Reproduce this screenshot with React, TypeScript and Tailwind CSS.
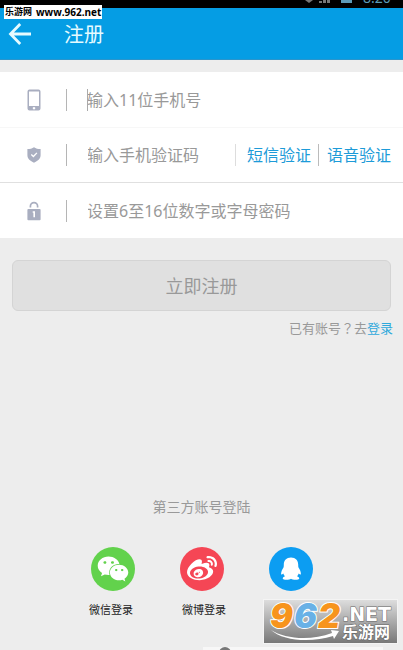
import { FaWeibo, FaWeixin } from "react-icons/fa"

function PhoneIcon() {
  return (
    <svg width="14" height="22" viewBox="0 0 14 22" aria-hidden="true">
      <path
        fill="#a9aec0"
        fillRule="evenodd"
        d="M2.500 0.500h9a2 2 0 0 1 2 2v17a2 2 0 0 1-2 2h-9a2 2 0 0 1-2-2v-17a2 2 0 0 1 2-2zM2 2.600v14.400h10V2.600zM7 17.900a1.300 1.300 0 1 0 0.010 0z"
      />
    </svg>
  )
}

function ShieldIcon() {
  return (
    <svg width="14" height="16" viewBox="0 0 14 16" aria-hidden="true">
      <path
        fill="#a9aec0"
        d="M7 0.200C8.800 1.500 11 2 13.600 2v6.200c0 3.500-3 5.800-6.600 7.500C3.400 14 0.400 11.700 0.400 8.200V2C3 2 5.200 1.500 7 0.200z"
      />
      <path fill="none" stroke="#fff" strokeWidth="1.300" d="M4.300 7.500l2.100 2 3.500-3.600" />
    </svg>
  )
}

function LockIcon() {
  return (
    <svg width="14" height="20" viewBox="0 0 14 20" aria-hidden="true">
      <path fill="none" stroke="#a9aec0" strokeWidth="1.700" d="M3.400 6.500V5.200a3.600 3.600 0 0 1 7.200 0v1.300" />
      <rect x="0.400" y="8" width="13.200" height="11.200" rx="1" fill="#a9aec0" />
      <path fill="#fff" d="M5.700 10.200h2.300v6H6.400v-4.400h-0.700z" />
    </svg>
  )
}

function BackIcon() {
  return (
    <svg width="24" height="24" viewBox="0 0 24 24" fill="none" stroke="#e6fbff" strokeWidth="2.800" aria-hidden="true">
      <path d="M12.200 2L2.500 12l9.700 10M2.500 12H23" />
    </svg>
  )
}

function PenguinIcon() {
  return (
    <svg width="22" height="24" viewBox="0 0 22 24" fill="#fff" aria-hidden="true">
      <path d="M11 .5c4.600 0 7.200 3 7.200 7 0 1.200 0 2.200.3 3 1.300 2 2.400 4.200 2.400 6.200 0 1.200-.8 1.300-2.200-.2-.3 1.100-.9 1.900-1.700 2.700 1.500.7 2.300 1.400 2.300 2.300 0 1.400-6.200 1.800-8.300.2-2.100 1.600-8.300 1.200-8.300-.2 0-.9.800-1.600 2.300-2.300-.8-.8-1.400-1.600-1.700-2.700-1.400 1.500-2.200 1.400-2.200.2 0-2 1.100-4.200 2.400-6.200.3-.8.300-1.800.3-3C3.800 3.500 6.400.5 11 .5z" />
    </svg>
  )
}

function StatusIcons() {
  return (
    <svg width="130" height="8" viewBox="0 0 130 8" aria-hidden="true">
      <path fill="#777" d="M32 0h8l-4 3z" />
      <path fill="#777" d="M46 3V1h3v2zM50 3V0h3v3zM54 3V0h3v3z" />
      <path fill="#5c9bb8" d="M68 0h11v3H68z" />
    </svg>
  )
}

function SiteLogo() {
  return (
    <svg
      className="absolute right-1 bottom-1.5"
      width="136"
      height="45"
      viewBox="0 0 136 45"
      role="img"
      aria-label="962.NET 乐游网"
    >
      <defs>
        <linearGradient id="plate" x1="0" y1="0" x2="0" y2="1">
          <stop offset="0" stopColor="#dedede" />
          <stop offset="1" stopColor="#777" />
        </linearGradient>
      </defs>
      <rect x="0.500" y="0.500" width="134" height="44" fill="url(#plate)" stroke="#f4f4f4" />
      <path fill="#fff" d="M8 31c14 9 40 11 61 3l-1-3 8 1-5 8-1-3C48 44 20 42 8 31z" />
      <g className="font-['Inter',sans-serif] text-[34px] font-black italic" stroke="#fff" strokeWidth="2" paintOrder="stroke">
        <text x="7" y="29" fill="#f7941d">9</text>
        <text x="31" y="29" fill="#69b1e6">6</text>
        <text x="55" y="29" fill="#f7941d">2</text>
      </g>
      <g className="font-['DejaVu_Sans','Noto_Sans_CJK_SC',sans-serif] font-bold" fill="#fff" stroke="#666" strokeWidth="1" paintOrder="stroke">
        <text x="79" y="22" className="text-[19px]">.NET</text>
        <text x="79" y="39" className="text-[16px]">乐游网</text>
      </g>
    </svg>
  )
}

const inputClass =
  "h-[22px] min-w-0 flex-1 border-l bg-transparent -indent-px text-base leading-[22px] text-[#777] outline-none placeholder:text-[#999]"

export default function App() {
  return (
    <div className="relative flex min-h-screen flex-col overflow-hidden bg-[#ededed] font-['Noto_Sans','Noto_Sans_CJK_SC',sans-serif]">
      <div className="flex h-2 justify-end overflow-hidden bg-black">
        <StatusIcons />
        <span className="-ml-10 w-10 -translate-y-2 text-sm leading-3 text-[#5c9bb8]">8:20</span>
      </div>
      <header className="flex h-[52px] items-center border-b border-[#2b95cb] bg-[#059de4] pl-2">
        <button type="button" aria-label="返回">
          <BackIcon />
        </button>
        <h1 className="ml-8 pt-0.5 text-xl leading-6 text-[#e6fbff]">注册</h1>
      </header>

      <form className="mt-3">
        <div className="bg-white">
          <div className="flex h-14 items-center border-b border-[#f7f7f7] pr-3 pl-[27px]">
            <PhoneIcon />
            <span className="mr-5 ml-[25px] h-[22px] w-px bg-[#b5b5b5]" />
            <input className={`${inputClass} border-[#aaa]`} type="tel" aria-label="手机号" placeholder="输入11位手机号" />
          </div>
          <div className="flex h-[55px] items-center border-b border-[#e0e0e0] pr-3 pl-[27px]">
            <ShieldIcon />
            <span className="mr-5 ml-[25px] h-[22px] w-px bg-[#b5b5b5]" />
            <input className={`${inputClass} border-transparent`} type="text" aria-label="验证码" placeholder="输入手机验证码" />
            <button type="button" className="h-[22px] border-l border-[#ddd] pr-[7px] pl-[11px] text-base leading-[22px] text-[#1d9bd8]">
              短信验证
            </button>
            <button type="button" className="h-[22px] border-l border-[#bbb] pl-2 text-base leading-[22px] text-[#1d9bd8]">
              语音验证
            </button>
          </div>
          <div className="flex h-[55px] items-center pr-3 pl-[27px]">
            <LockIcon />
            <span className="mr-5 ml-[25px] h-[22px] w-px bg-[#b5b5b5]" />
            <input className={`${inputClass} border-transparent`} type="password" aria-label="密码" placeholder="设置6至16位数字或字母密码" />
          </div>
        </div>
        <div className="px-3 pt-[22px]">
          <button type="submit" className="h-[51px] w-full rounded-md border border-[#d4d4d4] bg-[#e0e0e0] text-lg text-[#999]">
            立即注册
          </button>
        </div>
      </form>
      <p className="mt-[7px] pr-2.5 text-right text-[13px] leading-5 text-[#999]">
        已有账号<span className="font-['Noto_Sans_CJK_TC',sans-serif]" lang="zh-TW">？</span>去
        <a href="#login" className="text-[#2fa9dc]">登录</a>
      </p>

      <section className="mt-auto flex flex-col items-center pb-8">
        <h2 className="text-sm leading-5 text-[#999]">第三方账号登陆</h2>
        <div className="mt-[30px] flex gap-[45px]">
          <button type="button" aria-labelledby="wechat" className="flex size-11 items-center justify-center rounded-full bg-[#62d24c] text-white">
            <FaWeixin size={32} />
          </button>
          <button type="button" aria-labelledby="weibo" className="flex size-11 items-center justify-center rounded-full bg-[#f54655] text-white">
            <FaWeibo size={30} />
          </button>
          <button type="button" aria-labelledby="qq" className="flex size-11 items-center justify-center rounded-full bg-[#0c9df2]">
            <PenguinIcon />
          </button>
        </div>
        <div className="mt-[11px] flex gap-[49px] text-[11px] leading-4 text-[#222]">
          <span id="wechat">微信登录</span>
          <span id="weibo">微博登录</span>
          <span id="qq">QQ登录</span>
        </div>
      </section>

      <span className="absolute top-[5px] left-1 flex h-3.5 items-center gap-1 bg-white px-px text-[9px] leading-3 font-bold text-black">
        乐游网
        <span className="font-['Open_Sans',sans-serif] text-[10px]">www.962.net</span>
      </span>
      <SiteLogo />
      <div className="absolute right-5 bottom-0 h-[3px] w-[180px] overflow-hidden bg-[#f7f7f7]">
        <div className="ml-4 size-3 rounded-full bg-[#777]" />
      </div>
    </div>
  )
}
